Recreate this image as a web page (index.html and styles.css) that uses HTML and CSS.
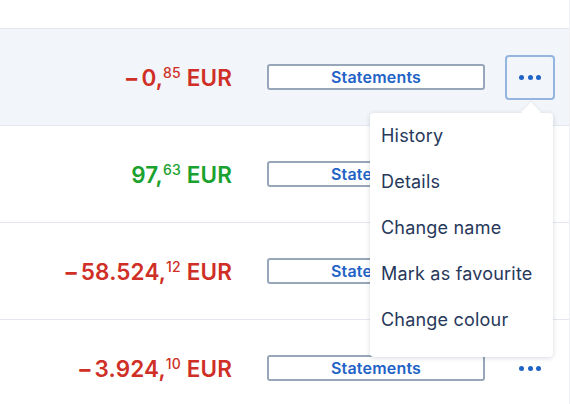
FILE: index.html
```html
<!DOCTYPE html>
<html>
<head>
<meta charset="utf-8">
<link rel="stylesheet" href="styles.css">
</head>
<body>
<div class="list">
  <div class="top"></div>
  <div class="row active">
    <div class="amount neg"><span class="minus">−</span>0,<sup>85</sup> EUR</div>
    <button class="stmt">Statements</button>
    <button class="more open"><span class="dot"></span><span class="dot"></span><span class="dot"></span></button>
    <div class="menu">
      <div class="item">History</div>
      <div class="item">Details</div>
      <div class="item">Change name</div>
      <div class="item">Mark as favourite</div>
      <div class="item">Change colour</div>
    </div>
  </div>
  <div class="row">
    <div class="amount pos">97,<sup>63</sup> EUR</div>
    <button class="stmt">Statements</button>
    <button class="more"><span class="dot"></span><span class="dot"></span><span class="dot"></span></button>
  </div>
  <div class="row">
    <div class="amount neg"><span class="minus">−</span>58.524,<sup>12</sup> EUR</div>
    <button class="stmt">Statements</button>
    <button class="more"><span class="dot"></span><span class="dot"></span><span class="dot"></span></button>
  </div>
  <div class="row">
    <div class="amount neg"><span class="minus">−</span>3.924,<sup>10</sup> EUR</div>
    <button class="stmt">Statements</button>
    <button class="more"><span class="dot"></span><span class="dot"></span><span class="dot"></span></button>
  </div>
</div>
</body>
</html>
```
FILE: styles.css
```css
* { box-sizing: border-box; }
html, body { margin: 0; padding: 0; background: #fff; }
body {
  font-family: Inter, "Noto Sans", sans-serif;
  width: 570px;
  height: 404px;
  overflow: hidden;
}
.list { width: 570px; border-right: 1px solid #eef0f3; }
.top { height: 29px; border-bottom: 1px solid #e4e8ee; }
.row {
  position: relative;
  height: 97px;
  border-bottom: 1px solid #e4e8ee;
  display: flex;
  align-items: center;
  justify-content: flex-end;
  padding-right: 14px;
}
.row.active { background: #f2f5f9; }
.amount {
  font-size: 22.5px;
  font-weight: 600;
  letter-spacing: 0.15px;
  margin-right: 35px;
  white-space: nowrap;
}
.amount sup {
  font-size: 14px;
  font-weight: 500;
  vertical-align: 0;
  position: relative;
  top: -8px;
  line-height: 0;
}
.minus { margin-right: 2px; font-weight: 700; }
.neg { color: #cf2f26; }
.pos { color: #1ba12e; }
.stmt {
  width: 218px;
  height: 26px;
  border: 2px solid #97a6b8;
  border-radius: 3px;
  background: #fff;
  color: #1f63c6;
  font-family: Inter, "Noto Sans", sans-serif;
  font-size: 16px;
  font-weight: 600;
  letter-spacing: 0.2px;
  padding: 0;
  margin-right: 20px;
}
.more {
  width: 50px;
  height: 45px;
  border: 2px solid transparent;
  border-radius: 4px;
  background: transparent;
  display: flex;
  align-items: center;
  justify-content: center;
  gap: 3.5px;
  padding: 0;
}
.more.open { border-color: #93b5e0; }
.dot {
  width: 5px;
  height: 5px;
  border-radius: 50%;
  background: #1f63c6;
}
.menu {
  position: absolute;
  top: 84px;
  right: 16px;
  width: 183px;
  background: #fff;
  border-radius: 4px;
  box-shadow: 0 1px 5px rgba(30, 45, 70, 0.18);
  padding: 8px 0 6px;
  z-index: 5;
}
.menu::before {
  content: "";
  position: absolute;
  top: -8px;
  right: 15px;
  width: 14px;
  height: 14px;
  background: #fff;
  transform: rotate(45deg);
  box-shadow: -1px -1px 2px rgba(30, 45, 70, 0.06);
}
.item {
  position: relative;
  height: 46px;
  line-height: 30px;
  padding-left: 11px;
  font-size: 18px;
  letter-spacing: 0.2px;
  color: #27385a;
  white-space: nowrap;
}
```
